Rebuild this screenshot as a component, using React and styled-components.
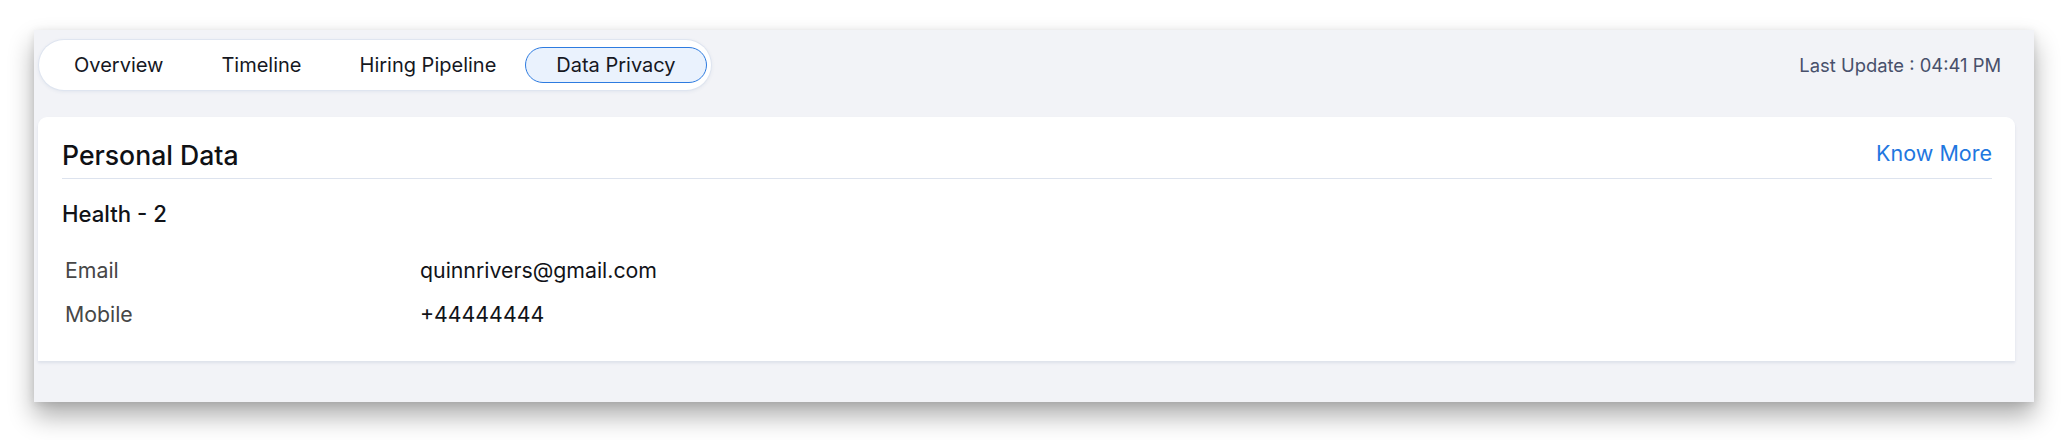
import React from 'react';
import styled, { createGlobalStyle } from 'styled-components';

const GlobalStyle = createGlobalStyle`
  body {
    margin: 0;
    background: #ffffff;
    font-family: Inter, "Noto Sans", sans-serif;
    color: #111318;
  }
`;

const Page = styled.div`
  padding: 30px 0 40px 34px;
`;

const Panel = styled.section`
  width: 2000px;
  height: 372px;
  box-sizing: border-box;
  padding: 10px 19px 0 4px;
  background: #f2f3f7;
  box-shadow: 0 14px 24px rgba(0, 0, 0, 0.32), 0 2px 8px rgba(0, 0, 0, 0.1);
`;

const TopBar = styled.div`
  display: flex;
  align-items: center;
  justify-content: space-between;
`;

const Tabs = styled.nav`
  display: flex;
  align-items: center;
  height: 50px;
  box-sizing: border-box;
  margin-left: 1px;
  padding: 0 4px 0 6px;
  background: #ffffff;
  border-radius: 25px;
  box-shadow: 0 0 0 1px #dfe5f0, 0 1px 4px rgba(60, 90, 140, 0.12);
`;

const Tab = styled.button`
  height: 36px;
  box-sizing: border-box;
  padding: 0 ${({ $active }) => ($active ? '30px' : '28px')};
  border-radius: 18px;
  border: 1.5px solid ${({ $active }) => ($active ? '#2d7be0' : 'transparent')};
  background: ${({ $active }) => ($active ? '#eaf2fd' : 'transparent')};
  font-family: Inter, sans-serif;
  font-size: 20px;
  color: #16181f;
  cursor: pointer;
`;

const Updated = styled.span`
  margin-right: 14px;
  font-size: 18.4px;
  color: #48506b;
`;

const Card = styled.div`
  margin-top: 27px;
  height: 244px;
  box-sizing: border-box;
  padding: 0 23px 0 24px;
  background: #ffffff;
  border-radius: 9px 9px 0 0;
  box-shadow: 0 2px 3px rgba(70, 100, 150, 0.12);
`;

const CardHead = styled.div`
  display: flex;
  align-items: center;
  justify-content: space-between;
  padding: 20px 0 5px;
  border-bottom: 1px solid #dde3ee;
`;

const Title = styled.h2`
  margin: 0;
  font-size: 26.6px;
  line-height: 36px;
  font-weight: 500;
  color: #0f1115;
`;

const Link = styled.a`
  font-size: 21.5px;
  color: #1f77e0;
  text-decoration: none;
  margin-top: -4px;
`;

const Section = styled.h3`
  margin: 20px 0 0;
  font-size: 22.2px;
  line-height: 30px;
  font-weight: 500;
  color: #111318;
`;

const Fields = styled.dl`
  display: grid;
  grid-template-columns: 355px 1fr;
  margin: 19px 0 0;
  padding-left: 3px;
`;

const Label = styled.dt`
  font-size: 21.3px;
  line-height: 24px;
  padding: 10px 0;
  color: #474747;
`;

const Value = styled.dd`
  margin: 0;
  font-size: 21.3px;
  line-height: 24px;
  padding: 10px 0;
  color: #111318;
`;

const tabs = ['Overview', 'Timeline', 'Hiring Pipeline', 'Data Privacy'];

const fields = [
  ['Email', 'quinnrivers@gmail.com'],
  ['Mobile', '+44444444'],
];

export default function App() {
  return (
    <Page>
      <GlobalStyle />
      <Panel>
        <TopBar>
          <Tabs>
            {tabs.map((t) => (
              <Tab key={t} $active={t === 'Data Privacy'}>{t}</Tab>
            ))}
          </Tabs>
          <Updated>Last Update : 04:41 PM</Updated>
        </TopBar>
        <Card>
          <CardHead>
            <Title>Personal Data</Title>
            <Link href="#">Know More</Link>
          </CardHead>
          <Section>Health - 2</Section>
          <Fields>
            {fields.map(([k, v]) => (
              <React.Fragment key={k}>
                <Label>{k}</Label>
                <Value>{v}</Value>
              </React.Fragment>
            ))}
          </Fields>
        </Card>
      </Panel>
    </Page>
  );
}
